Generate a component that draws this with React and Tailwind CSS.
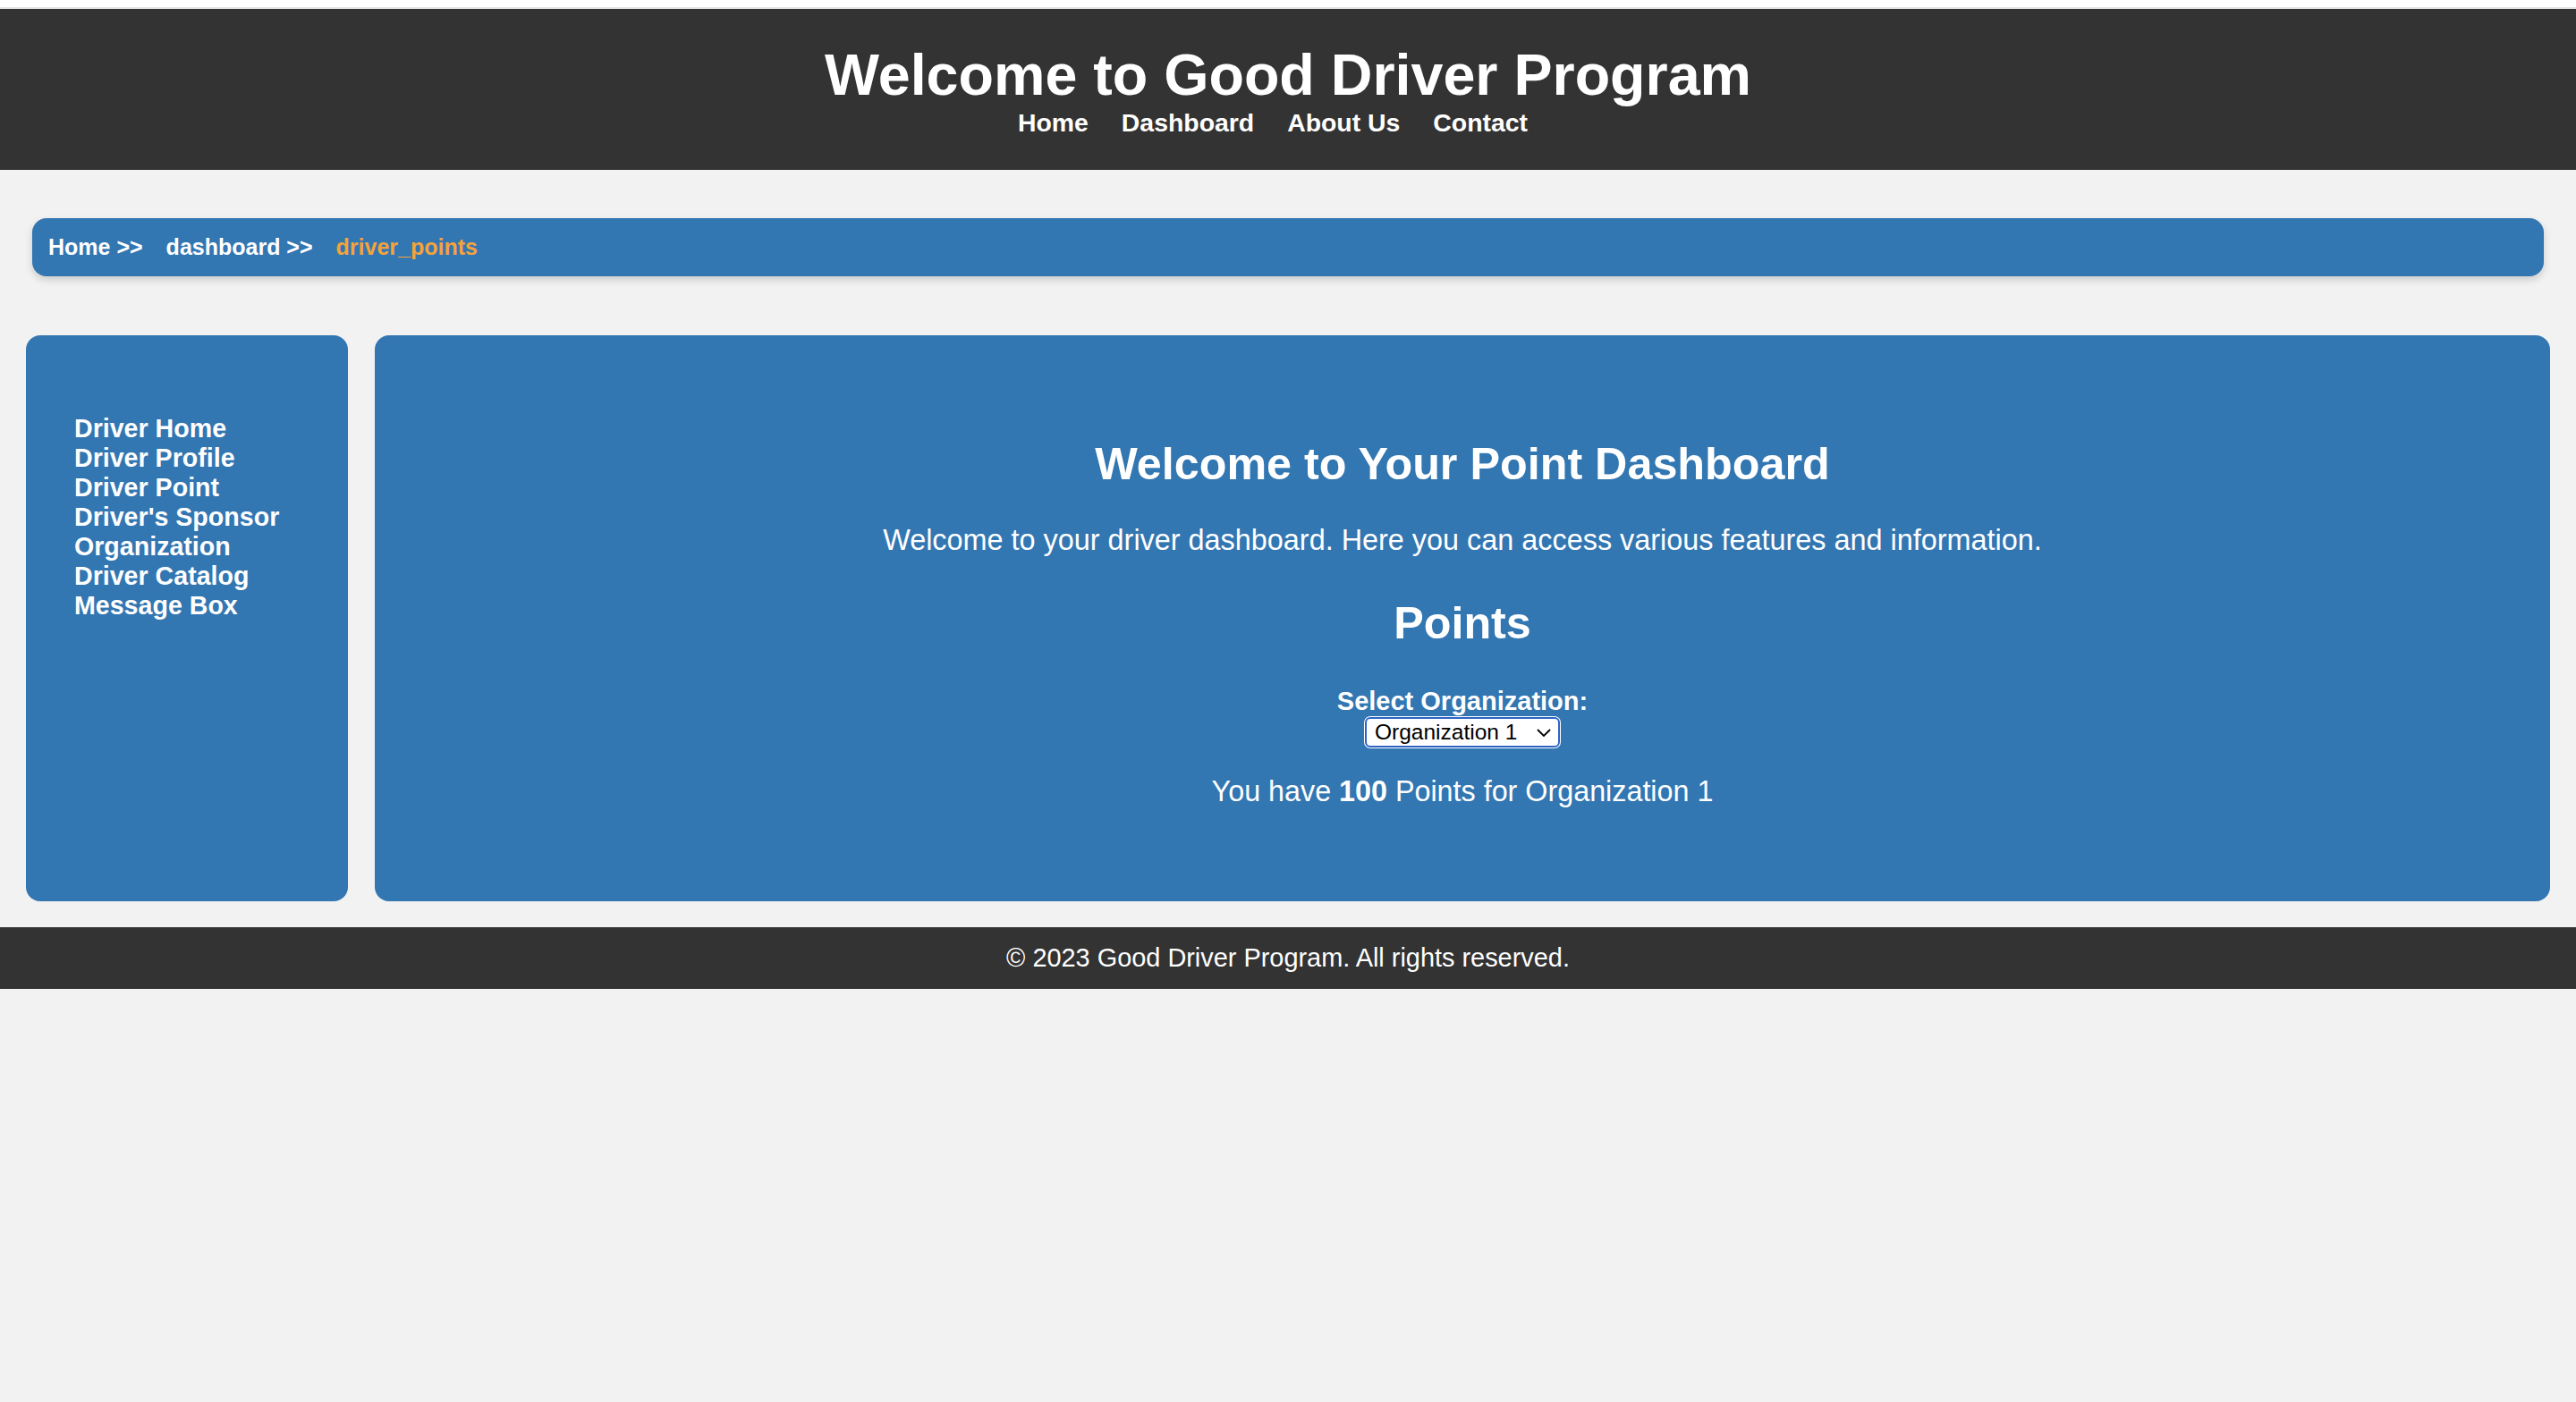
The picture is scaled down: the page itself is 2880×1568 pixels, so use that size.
import React from "react";

export default function App() {
  const sideLinks = [
    "Driver Home",
    "Driver Profile",
    "Driver Point",
    "Driver's Sponsor Organization",
    "Driver Catalog",
    "Message Box",
  ];
  return (
    <div className="min-h-screen bg-[#f2f2f2] font-['Liberation_Sans',Arial,sans-serif] flex flex-col">
      <div className="h-[8px] bg-white" />
      <div className="h-[2px] bg-[#e2e2e2]" />
      <header className="h-[180px] bg-[#333333] flex flex-col items-center justify-center text-white">
        <h1 className="text-[64.6px] font-bold leading-[74px]">Welcome to Good Driver Program</h1>
        <nav className="flex gap-[37px] pr-[34px] text-[28.4px] font-bold leading-[32px]">
          <a href="#">Home</a>
          <a href="#">Dashboard</a>
          <a href="#">About Us</a>
          <a href="#">Contact</a>
        </nav>
      </header>

      <div className="mx-[36px] mt-[54px] h-[65px] rounded-[16px] bg-[#3276b2] shadow-[0_4px_8px_rgba(0,0,0,0.16)] flex items-center px-[18px] gap-[26px] text-[25px] font-bold">
        <span className="text-white">Home &gt;&gt;</span>
        <span className="text-white">dashboard &gt;&gt;</span>
        <span className="text-[#f4a33b]">driver_points</span>
      </div>

      <div className="mt-[66px] px-[29px] flex gap-[30px]">
        <aside className="w-[360px] shrink-0 rounded-[16px] bg-[#3276b2] pt-[88px] pl-[54px] pr-[20px]">
          <ul className="text-white text-[28.6px] font-bold leading-[33px]">
            {sideLinks.map((l) => (
              <li key={l} className="w-[245px]">
                <a href="#">{l}</a>
              </li>
            ))}
          </ul>
        </aside>
        <main className="flex-1 rounded-[16px] bg-[#3276b2] pt-[116px] pb-[104px] flex flex-col items-center text-white">
          <h2 className="text-[50.3px] font-bold leading-[55px]">Welcome to Your Point Dashboard</h2>
          <p className="mt-[40px] text-[32.4px] leading-[37px]">
            Welcome to your driver dashboard. Here you can access various features and information.
          </p>
          <h2 className="mt-[46px] text-[50.3px] font-bold leading-[55px]">Points</h2>
          <label className="mt-[44px] text-[29px] font-bold leading-[32px]">Select Organization:</label>
          <div className="relative mt-[2px] w-[218px] h-[34px]">
            <select
              defaultValue="1"
              className="appearance-none w-full h-full bg-white text-black text-[24.5px] leading-[28px] pl-[9px] pr-[30px] border-2 border-[#2c64c6] rounded-[6px] shadow-[0_0_0_1px_#ffffff] outline-none font-['Liberation_Sans',Arial,sans-serif]"
            >
              <option value="1">Organization 1</option>
              <option value="2">Organization 2</option>
            </select>
            <svg
              className="pointer-events-none absolute right-[10px] top-[13px]"
              width="16"
              height="9"
              viewBox="0 0 16 9"
              fill="none"
            >
              <polyline points="1,1 8,8 15,1" stroke="#000" strokeWidth="1.8" />
            </svg>
          </div>
          <p className="mt-[31px] text-[32.3px] leading-[37px]">
            You have <strong>100</strong> Points for Organization 1
          </p>
        </main>
      </div>

      <footer className="mt-[29px] h-[69px] bg-[#333333] flex items-center justify-center text-white text-[28.9px]">
        © 2023 Good Driver Program. All rights reserved.
      </footer>
    </div>
  );
}
